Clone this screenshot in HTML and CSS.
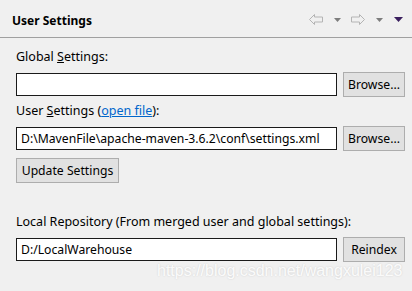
FILE: index.html
```html
<!DOCTYPE html>
<html lang="en">
<head>
    <meta charset="UTF-8">
    <meta name="viewport" content="width=device-width, initial-scale=1.0">
    <link rel="stylesheet" href="styles.css">
</head>
<body>

    <div class="view-header">
        <span class="view-title">User Settings</span>
        <div class="view-tools">
            <svg class="nav-arrow" width="14" height="11" viewBox="0 0 14 11">
                <path d="M0.5 5.5 L5.5 0.5 L5.5 3 L13.5 3 L13.5 8 L5.5 8 L5.5 10.5 Z" fill="none" stroke="#b4b4b4" stroke-width="1"/>
            </svg>
            <svg class="drop" width="7" height="4" viewBox="0 0 7 4"><path d="M0 0 H7 L3.5 4 Z" fill="#7d7d7d"/></svg>
            <svg class="nav-arrow" width="14" height="11" viewBox="0 0 14 11">
                <path d="M13.5 5.5 L8.5 0.5 L8.5 3 L0.5 3 L0.5 8 L8.5 8 L8.5 10.5 Z" fill="none" stroke="#b4b4b4" stroke-width="1"/>
            </svg>
            <svg class="drop" width="7" height="4" viewBox="0 0 7 4"><path d="M0 0 H7 L3.5 4 Z" fill="#7d7d7d"/></svg>
            <svg class="drop menu" width="9" height="5" viewBox="0 0 9 5"><path d="M0 0 H9 L4.5 5 Z" fill="#3a1f5e"/></svg>
        </div>
    </div>

    <div class="settings">
        <div class="field-label first">Global <u>S</u>ettings:</div>
        <div class="field-row">
            <div class="text-box"></div>
            <button class="push-button">Browse...</button>
        </div>

        <div class="field-label">User <u>S</u>ettings (<a href="#" class="link">open file</a>):</div>
        <div class="field-row">
            <div class="text-box">D:\MavenFile\apache-maven-3.6.2\conf\settings.xml</div>
            <button class="push-button">Browse...</button>
        </div>

        <button class="push-button update-button">Update Settings</button>

        <div class="field-label repo-label">Local Repository (From merged user and global settings):</div>
        <div class="field-row">
            <div class="text-box">D:/LocalWarehouse</div>
            <button class="push-button">Reindex</button>
        </div>
    </div>

    <div class="watermark">https://blog.csdn.net/wangxulei123</div>

</body>
</html>
```

FILE: styles.css
```css
body {
    margin: 0;
    font-family: 'Noto Sans', 'Open Sans', sans-serif;
    font-size: 12px;
    background-color: #f0f0f0;
    color: #000;
    position: relative;
    height: 291px;
    overflow: hidden;
}

.view-header {
    height: 37px;
    border-bottom: 1px solid #a0a0a0;
    display: flex;
    align-items: center;
    justify-content: space-between;
    padding: 0 9px 0 12px;
}

.view-title {
    font-weight: bold;
    font-size: 12px;
    margin-top: 3px;
}

.view-tools {
    display: flex;
    align-items: center;
    margin-top: 2px;
}

.nav-arrow {
    margin-right: 11px;
}

.drop {
    margin-right: 10px;
}

.drop.menu {
    margin-right: 0;
    margin-left: 1px;
}

.settings {
    padding: 0 7px 0 16px;
}

.field-label {
    font-size: 12.5px;
    line-height: 16px;
    margin-top: 6px;
    margin-bottom: 7px;
}

.field-label.first {
    margin-top: 11px;
}

.field-label.repo-label {
    margin-top: 31px;
}

.link {
    color: #0066cc;
}

.field-row {
    display: grid;
    grid-template-columns: 1fr 62px;
    column-gap: 6px;
    align-items: center;
}

.text-box {
    height: 21px;
    line-height: 21px;
    font-size: 12.2px;
    background-color: #fff;
    border: 1px solid #1a1a1a;
    padding: 0 4px;
    white-space: nowrap;
    overflow: hidden;
}

.push-button {
    height: 25px;
    background-color: #e1e1e1;
    border: 1px solid #adadad;
    font-family: inherit;
    font-size: 12.2px;
    color: #000;
    padding: 0;
    margin: 0;
}

.update-button {
    display: block;
    width: 103px;
    margin-top: 7px;
}

.watermark {
    position: absolute;
    left: 157px;
    top: 262px;
    font-family: 'Liberation Sans', Arial, sans-serif;
    font-size: 16px;
    color: rgba(255, 255, 255, 0.9);
    text-shadow: 0 0 2px rgba(0, 0, 0, 0.15);
}
```
